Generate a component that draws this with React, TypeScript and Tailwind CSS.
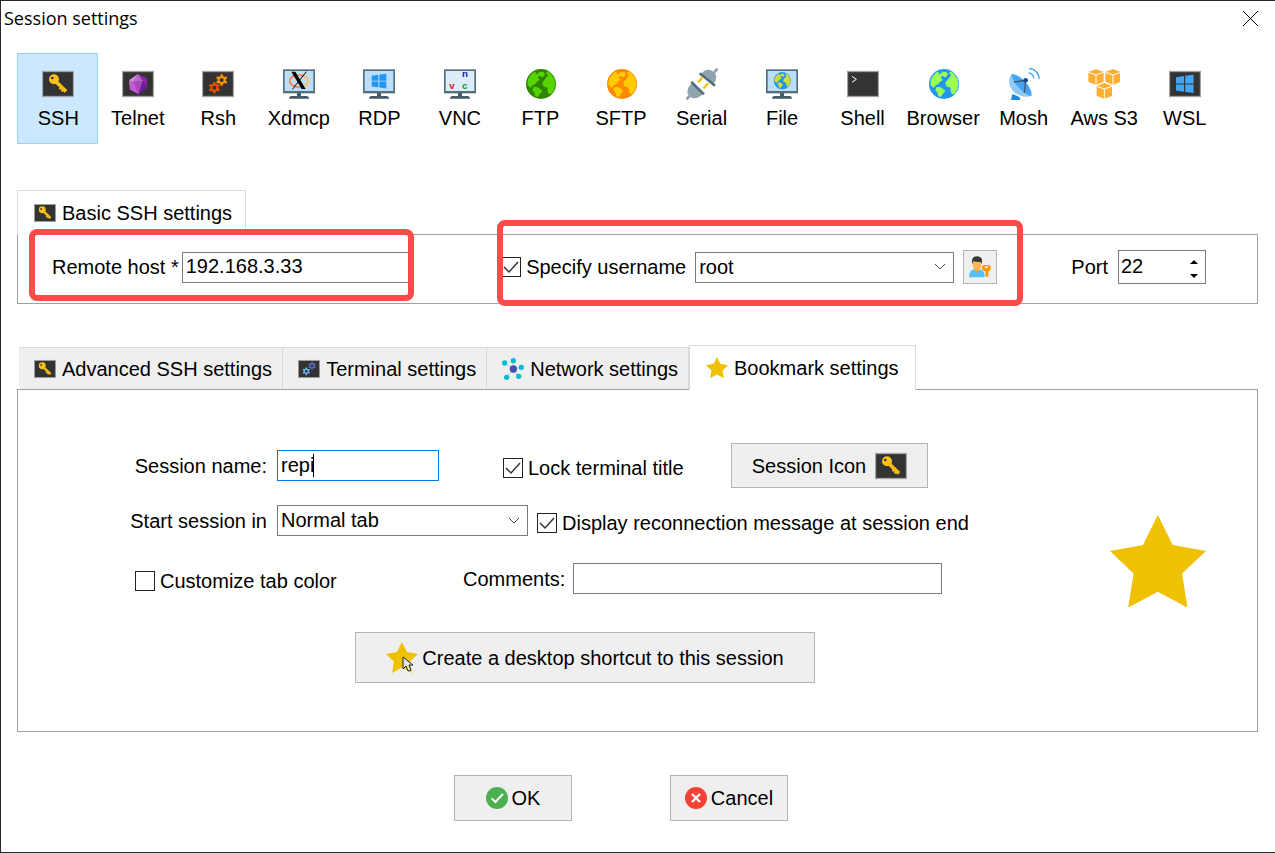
import { useState } from "react";
import type { ReactNode } from "react";

interface SessionType {
  name: string;
  icon: ReactNode;
}

interface CheckboxProps {
  id: string;
  label: string;
  defaultChecked?: boolean;
}

interface SelectProps {
  id: string;
  label?: string;
  options: string[];
  className: string;
}

const KeyShape = () => (
  <>
    <path d="M43 42 L72 70" stroke="#fbc117" strokeWidth="11" />
    <path d="M52 60 L64 72" stroke="#fbc117" strokeWidth="5" strokeDasharray="6 3" />
    <circle cx="36" cy="34" r="15" fill="#fbc117" />
    <circle cx="31" cy="30" r="4" fill="#333333" />
    <path d="M46 42 L72 68" stroke="#e8a90c" strokeWidth="2" />
  </>
);

const GearShape = ({ cx, cy, color }: { cx: number; cy: number; color: string }) => (
  <g transform={`translate(${cx} ${cy})`} stroke={color} fill="none">
    <circle r="9" strokeWidth="6" />
    <path
      d="M0 -10V-17M0 10V17M9 -5L15 -8M-9 -5L-15 -8M9 5L15 8M-9 5L-15 8"
      strokeWidth="7"
    />
  </g>
);

const WindowsShape = ({ color }: { color: string }) => (
  <path
    d="M0 7 L20 4 V25 H0Z M23 3 L44 0 V25 H23Z M0 28 H20 V48 L0 45Z M23 28 H44 V52 L23 49Z"
    fill={color}
  />
);

const GlobeShape = ({ sea, land }: { sea: string; land: string }) => (
  <>
    <circle r="45" fill={sea} />
    <path
      d="M-31 -27 L-20 -37 L-14 -34 L-18 -28 L-10 -31 L-4 -37 L7 -36 L12 -29 L6 -21 L1 -21 L-3 -25 L-10 -20 L-4 -12 L-12 -7 L-17 0 L-25 4 L-31 12 L-41 2 L-39 -14Z"
      fill={land}
    />
    <path
      d="M10 -12 L18 -21 L21 -28 L15 -32 L19 -38 L30 -31 L40 -16 L43 0 L39 18 L32 29 L25 31 L20 23 L20 11 L7 7 L4 -4Z"
      fill={land}
    />
    <path d="M-22 9 L-10 10 L0 17 L4 21 L-3 29 L-10 39 L-18 36 L-19 27 L-26 18Z" fill={land} />
  </>
);

// Every drawing uses a 96 unit square, three units to a pixel at full size
const Drawing = ({ children, className = "size-8" }: { children: ReactNode; className?: string }) => (
  <svg viewBox="0 0 96 96" className={`shrink-0 ${className}`} aria-hidden="true">
    {children}
  </svg>
);

const Console = ({ children }: { children: ReactNode }) => (
  <>
    <rect x="1.5" y="10.5" width="93" height="75" fill="#333333" stroke="#a3a3a3" strokeWidth="4" />
    {children}
  </>
);

const Monitor = ({ children, screen = "#bbdefb" }: { children: ReactNode; screen?: string }) => (
  <>
    <rect x="42" y="74" width="12" height="12" fill="#455a64" />
    <path d="M18 92 Q18 84 26 84 H70 Q78 84 78 92Z" fill="#455a64" />
    <rect y="4" width="96" height="72" fill="#546e7a" />
    <rect x="5" y="9" width="86" height="60" fill={screen} />
    {children}
  </>
);

const KeyIcon = ({ className }: { className?: string }) => (
  <Drawing className={className}>
    <Console>
      <KeyShape />
    </Console>
  </Drawing>
);

const StarIcon = ({ className }: { className: string }) => (
  <svg viewBox="0 0 285 275" className={`shrink-0 ${className}`} aria-hidden="true">
    <path
      d="M142 0 L186 89 L285 107 L214 174 L230 275 L142 228 L54 275 L70 174 L0 107 L98 89Z"
      fill="#f0c002"
    />
  </svg>
);

const Cube = ({ x, y }: { x: number; y: number }) => (
  <g transform={`translate(${x} ${y})`}>
    <path d="M0 -24 L23 -15 V14 L0 24 L-23 14 V-15Z" fill="#ffb033" />
    <path d="M-23 -14 L0 -6 L23 -14 M0 -6 V24" fill="none" stroke="#ffffff" strokeWidth="3" />
  </g>
);

const sessionTypes: SessionType[] = [
  { name: "SSH", icon: <Console><KeyShape /></Console> },
  {
    name: "Telnet",
    icon: (
      <Console>
        <path d="M48 18 L74 31 L76 58 L50 78 L24 65 L21 37Z" fill="#8e24aa" />
        <path d="M48 18 L21 37 L34 42Z" fill="#ce93d8" />
        <path d="M48 18 L34 42 L62 40Z" fill="#ba68c8" />
        <path d="M21 37 L34 42 L24 65Z" fill="#ba68c8" />
        <path d="M34 42 L62 40 L50 78Z" fill="#ab47bc" />
        <path d="M34 42 L50 78 L24 65Z" fill="#c65fd6" />
        <path d="M62 40 L76 58 L50 78Z" fill="#6a1b9a" />
      </Console>
    ),
  },
  {
    name: "Rsh",
    icon: (
      <Console>
        <GearShape cx={59} cy={36} color="#ff9800" />
        <GearShape cx={37} cy={59} color="#e65100" />
      </Console>
    ),
  },
  {
    name: "Xdmcp",
    icon: (
      <Monitor>
        <ellipse cx="48" cy="39" rx="28" ry="18" fill="none" stroke="#ff7a3d" strokeWidth="5" />
        <path d="M64 25 Q80 34 76 44 Q73 52 60 56" fill="none" stroke="#f5cf7a" strokeWidth="5" />
        <path d="M70 11 L28 64" stroke="#000000" strokeWidth="3" />
        <path d="M25 11 H37 L68 63 H56Z" fill="#000000" />
      </Monitor>
    ),
  },
  {
    name: "RDP",
    icon: (
      <Monitor>
        <g transform="translate(26 17) scale(1 .85)">
          <WindowsShape color="#2196f3" />
        </g>
      </Monitor>
    ),
  },
  {
    name: "VNC",
    icon: (
      <Monitor screen="#dcecfb">
        <g className="font-['Liberation_Sans'] font-bold" fontSize="29">
          <text x="16" y="63" fill="#e01010">v</text>
          <text x="54" y="27" fill="#1010e0">n</text>
          <text x="54" y="63" fill="#109a10">c</text>
        </g>
      </Monitor>
    ),
  },
  {
    name: "FTP",
    icon: (
      <g transform="translate(51 48)">
        <GlobeShape sea="#2f8500" land="#55d400" />
      </g>
    ),
  },
  {
    name: "SFTP",
    icon: (
      <g transform="translate(51 48)">
        <GlobeShape sea="#ff8800" land="#ffcc00" />
      </g>
    ),
  },
  {
    name: "Serial",
    icon: (
      <g fill="none">
        <path d="M95 2 L82 15 M1 94 L14 81" stroke="#90a4ae" strokeWidth="8" />
        <path d="M45 19 Q56 3 75 6 L89 19 Q94 38 81 50Z M19 46 Q1 59 5 78 L18 90 Q38 93 51 77Z" fill="#90a4ae" />
        <path d="M49 29 L36 43 M66 46 L53 61" stroke="#ffc107" strokeWidth="7" />
        <path d="M41 16 L87 53 M16 42 L54 79" stroke="#546e7a" strokeWidth="8" />
      </g>
    ),
  },
  {
    name: "File",
    icon: (
      <Monitor>
        <g transform="translate(49 38) scale(.57)">
          <GlobeShape sea="#2196f3" land="#cddc39" />
        </g>
      </Monitor>
    ),
  },
  {
    name: "Shell",
    icon: (
      <Console>
        <path d="M15 25 L28 34 L15 43" fill="none" stroke="#ffffff" strokeWidth="3" />
      </Console>
    ),
  },
  {
    name: "Browser",
    icon: (
      <g transform="translate(51 48)">
        <GlobeShape sea="#2196f3" land="#9bff57" />
      </g>
    ),
  },
  {
    name: "Mosh",
    icon: (
      <g fill="none">
        <path d="M9 96 L13 78 L30 85 L36 89 V96Z" fill="#1e88e5" />
        <path d="M11 19 C30 19 64 51 70 84 C48 91 22 82 10 62 C0 46 2 28 11 19Z" fill="#90caf9" />
        <path d="M11 19 C34 16 77 60 70 84 C52 84 11 43 11 19Z" fill="#42a5f5" />
        <path d="M18 42 L53 37 L49 75" stroke="#455a64" strokeWidth="4" />
        <circle cx="53" cy="37" r="7" fill="#0d47a1" />
        <path d="M62 14 Q76 18 78 31 M63 1 Q90 4 94 33" stroke="#42a5f5" strokeWidth="4" />
      </g>
    ),
  },
  {
    name: "Aws S3",
    icon: (
      <>
        <Cube x={24} y={27} />
        <Cube x={75} y={27} />
        <Cube x={49} y={69} />
      </>
    ),
  },
  {
    name: "WSL",
    icon: (
      <Console>
        <g transform="translate(21 20) scale(1.2 1.06)">
          <WindowsShape color="#42a5f5" />
        </g>
      </Console>
    ),
  },
];

const Chevron = () => (
  <svg
    viewBox="0 0 12 8"
    className="pointer-events-none absolute top-1/2 right-2 h-2 w-3 -translate-y-1/2"
    aria-hidden="true"
  >
    <path d="M1 1 L6 6 L11 1" fill="none" stroke="#444444" />
  </svg>
);

const Select = ({ id, label, options, className }: SelectProps) => (
  <div className={`relative ${className}`}>
    <select
      id={id}
      aria-label={label}
      className="block h-[31px] w-full appearance-none border border-[#7a7a7a] bg-white pr-6 pb-px pl-[3px] outline-none"
    >
      {options.map((option) => (
        <option key={option}>{option}</option>
      ))}
    </select>
    <Chevron />
  </div>
);

const Checkbox = ({ id, label, defaultChecked = false }: CheckboxProps) => (
  <div className="flex shrink-0 items-center gap-[5px]">
    <span className="relative block size-5">
      <input
        id={id}
        type="checkbox"
        defaultChecked={defaultChecked}
        className="peer block size-5 appearance-none border border-[#222222] bg-white"
      />
      <svg
        viewBox="0 0 20 20"
        className="pointer-events-none absolute inset-0 hidden size-5 peer-checked:block"
        aria-hidden="true"
      >
        <path d="M3 10 L8 15 L17 5" fill="none" stroke="#333333" strokeWidth="1.5" />
      </svg>
    </span>
    <label htmlFor={id} className="whitespace-nowrap">
      {label}
    </label>
  </div>
);

const tabs = [
  { name: "Advanced SSH settings", icon: <KeyIcon className="size-[22px]" /> },
  {
    name: "Terminal settings",
    icon: (
      <Drawing className="size-[22px]">
        <Console>
          <GearShape cx={61} cy={34} color="#5c6bc0" />
          <GearShape cx={36} cy={58} color="#64b5f6" />
        </Console>
      </Drawing>
    ),
  },
  {
    name: "Network settings",
    icon: (
      <svg viewBox="0 0 66 66" className="size-[22px] shrink-0" aria-hidden="true">
        <path
          d="M34 33 L8 15 M34 33 V8 M34 33 L57 28 M34 33 L50 55 M34 33 L14 58"
          stroke="#cfd8dc"
          strokeWidth="4"
        />
        <circle cx="34" cy="33" r="11" fill="#3f51b5" />
        <g fill="#00bcd4">
          <circle cx="8" cy="15" r="8" />
          <circle cx="34" cy="8" r="8" />
          <circle cx="58" cy="28" r="8" />
          <circle cx="50" cy="55" r="8" />
          <circle cx="14" cy="58" r="8" />
        </g>
      </svg>
    ),
  },
  { name: "Bookmark settings", icon: <StarIcon className="w-[22px]" /> },
];

const SessionToolbar = () => {
  const [selected, setSelected] = useState("SSH");

  return (
    <nav className="mr-[50px] ml-4 grid grid-cols-15">
      {sessionTypes.map((type) => (
        <button
          key={type.name}
          onClick={() => setSelected(type.name)}
          className={`flex h-[91px] flex-col items-center border pt-[14px] whitespace-nowrap ${
            selected === type.name ? "border-[#99d1ff] bg-[#cce8ff] pl-[2px]" : "border-transparent"
          }`}
        >
          <Drawing>{type.icon}</Drawing>
          <span className="mt-1 leading-7">{type.name}</span>
        </button>
      ))}
    </nav>
  );
};

const BasicSettings = () => {
  const [port, setPort] = useState(22);

  return (
    <section className="mt-[46px] mr-[17px] ml-4">
      <h2 className="relative z-10 -mb-px flex h-[45px] w-fit items-center gap-[6px] border border-b-0 border-[#dadada] bg-white pr-[13px] pl-4">
        <KeyIcon className="size-[22px]" />
        Basic SSH settings
      </h2>
      <div className="flex h-[70px] border border-[#a0a0a0] pr-[51px] pb-1 pl-[34px]">
        <div className="relative flex min-w-0 flex-[359] items-center gap-[3px]">
          <label htmlFor="host" className="whitespace-nowrap">
            Remote host *
          </label>
          <input
            id="host"
            defaultValue="192.168.3.33"
            className="h-[31px] min-w-0 flex-1 border border-[#7a7a7a] px-[3px] pb-px outline-none"
          />
          <div className="pointer-events-none absolute -top-[6px] -right-[3px] -bottom-[2px] -left-[23px] z-20 rounded-lg border-6 border-[#f84c48]" />
        </div>
        <div className="relative ml-[90px] flex min-w-0 flex-[496] items-center">
          <Checkbox id="specify" label="Specify username" defaultChecked />
          <Select id="username" label="Username" options={["root"]} className="ml-[9px] min-w-0 flex-1" />
          <button
            aria-label="Manage users"
            className="ml-[9px] flex size-[34px] shrink-0 items-center justify-center border border-[#b4b4b4] bg-[#efefef]"
          >
            <svg viewBox="0 0 66 66" className="size-[22px]" aria-hidden="true">
              <path d="M0 64 Q0 42 16 40 H32 Q47 42 47 64Z" fill="#4fc3f7" />
              <path d="M15 39 H33 L24 51Z" fill="#ff9800" />
              <path d="M11 14 H37 V26 Q37 40 24 44 Q11 40 11 26Z" fill="#ffb74d" />
              <path d="M9 24 V14 Q10 1 25 1 Q39 2 39 14 V24 L34 17 Q24 19 14 15Z" fill="#37383a" />
              <path d="M39 32 Q39 27 45 27 H59 Q65 27 65 32 V39 Q65 45 58 46 V60 L54 64 L49 60 V46 Q39 44 39 37Z" fill="#ff9800" />
              <rect x="47" y="31" width="10" height="4" fill="#ffffff" />
            </svg>
          </button>
          <div className="pointer-events-none absolute -top-[15px] -right-[26px] -bottom-[7px] -left-1 z-20 rounded-lg border-6 border-[#f84c48]" />
        </div>
        <div className="ml-[74px] flex items-center gap-[10px]">
          <label htmlFor="port">Port</label>
          <div className="flex h-[34px] w-[88px] border border-[#7a7a7a]">
            <input
              id="port"
              type="number"
              value={port}
              onChange={(e) => setPort(Number(e.target.value))}
              className="min-w-0 flex-1 pb-[3px] pl-[2px] outline-none [appearance:textfield] [&::-webkit-inner-spin-button]:appearance-none"
            />
            <div className="flex w-[22px] flex-col">
              <button
                aria-label="Increase port"
                onClick={() => setPort(port + 1)}
                className="flex flex-1 items-center justify-center pt-1"
              >
                <svg viewBox="0 0 8 4" className="h-1 w-2">
                  <path d="M0 4 L4 0 L8 4Z" />
                </svg>
              </button>
              <button
                aria-label="Decrease port"
                onClick={() => setPort(port - 1)}
                className="flex flex-1 items-center justify-center"
              >
                <svg viewBox="0 0 8 4" className="h-1 w-2">
                  <path d="M0 0 H8 L4 4Z" />
                </svg>
              </button>
            </div>
          </div>
        </div>
      </div>
    </section>
  );
};

const BookmarkForm = () => (
  <div className="flex items-center border border-[#a0a0a0] pt-[53px] pr-[51px] pb-12">
    <div className="flex min-w-0 flex-1 flex-col">
      <div className="flex h-[45px] items-center">
        <label htmlFor="name" className="w-[249px] shrink-0 text-right">
          Session name:
        </label>
        <div className="relative ml-[10px] w-[162px]">
          <input
            id="name"
            defaultValue="repi"
            className="block h-[31px] w-full border border-[#0078d7] px-[3px] outline-none"
          />
          <span className="absolute top-1 left-9 h-[23px] w-px bg-black" />
        </div>
        <div className="ml-16 w-[228px] pt-1">
          <Checkbox id="lock" label="Lock terminal title" defaultChecked />
        </div>
        <button className="flex h-[45px] w-[197px] items-center justify-center gap-[9px] border border-[#b4b4b4] bg-[#efefef]">
          Session Icon
          <KeyIcon className="size-8" />
        </button>
      </div>
      <div className="mt-[17px] flex h-[31px] items-center">
        <label htmlFor="start" className="w-[249px] shrink-0 text-right">
          Start session in
        </label>
        <Select id="start" options={["Normal tab", "Detached window"]} className="ml-[10px] w-[251px]" />
        <div className="ml-[9px] pt-1">
          <Checkbox id="reconnect" label="Display reconnection message at session end" defaultChecked />
        </div>
      </div>
      <div className="mt-[27px] flex h-[31px] items-center pl-[117px]">
        <div className="w-[328px] pt-1">
          <Checkbox id="color" label="Customize tab color" />
        </div>
        <label htmlFor="comments">Comments:</label>
        <input
          id="comments"
          className="ml-2 h-[31px] w-[369px] border border-[#7a7a7a] px-[3px] outline-none"
        />
      </div>
      <button className="mt-[38px] ml-[337px] flex h-[51px] w-[460px] items-center justify-center gap-1 border border-[#b4b4b4] bg-[#efefef]">
        <span className="relative">
          <StarIcon className="w-8" />
          <svg viewBox="0 0 12 18" className="absolute top-[14px] left-4 h-[18px] w-3" aria-hidden="true">
            <path
              d="M1 1 V13 L4 10 L6 15 L9 14 L7 9 H11Z"
              fill="#e4e4e4"
              stroke="#222222"
            />
          </svg>
        </span>
        Create a desktop shortcut to this session
      </button>
    </div>
    <StarIcon className="mb-1 w-24" />
  </div>
);

const BookmarkSettings = () => {
  const [active, setActive] = useState("Bookmark settings");

  return (
    <section className="mt-[41px] mr-[17px] ml-4">
      <div className="relative z-10 -mb-px flex items-end pl-[2px]">
        {tabs.map((tab) => (
          <button
            key={tab.name}
            onClick={() => setActive(tab.name)}
            className={`flex items-center gap-[6px] whitespace-nowrap ${
              active === tab.name
                ? "h-[45px] border border-b-0 border-[#dadada] bg-white px-4"
                : "mb-px h-[42px] border-t border-r border-[#dadada] bg-[#efefef] pr-[10px] pl-[15px]"
            }`}
          >
            {tab.icon}
            {tab.name}
          </button>
        ))}
      </div>
      <BookmarkForm />
    </section>
  );
};

const App = () => (
  <div className="flex min-h-screen flex-col border-t border-b border-l border-[#2a2629] bg-white font-['Liberation_Sans',Arial,sans-serif] text-xl leading-7 text-black">
    <header className="mb-[18px] flex h-[34px] items-center justify-between pr-4 pl-[3px]">
      <h1 className="font-['Open_Sans','Noto_Sans',sans-serif] text-lg">Session settings</h1>
      <button aria-label="Close">
        <svg viewBox="0 0 16 16" className="size-4" aria-hidden="true">
          <path d="M0 1 L15 16 M15 1 L0 16" stroke="#000000" />
        </svg>
      </button>
    </header>
    <SessionToolbar />
    <BasicSettings />
    <BookmarkSettings />
    <footer className="mt-[43px] flex justify-center gap-[98px] pr-[34px]">
      <button className="flex h-[46px] w-[118px] items-center justify-center gap-1 border border-[#b4b4b4] bg-[#efefef]">
        <svg viewBox="0 0 66 66" className="size-[22px]" aria-hidden="true">
          <circle cx="33" cy="33" r="33" fill="#4caf50" />
          <path d="M17 34 L28 45 L51 21" fill="none" stroke="#ffffff" strokeWidth="6" />
        </svg>
        OK
      </button>
      <button className="flex h-[46px] w-[118px] items-center justify-center gap-1 border border-[#b4b4b4] bg-[#efefef]">
        <svg viewBox="0 0 66 66" className="size-[22px]" aria-hidden="true">
          <circle cx="33" cy="33" r="33" fill="#f44336" />
          <path d="M21 21 L45 45 M45 21 L21 45" stroke="#ffffff" strokeWidth="7" />
        </svg>
        Cancel
      </button>
    </footer>
  </div>
);

export default App;
